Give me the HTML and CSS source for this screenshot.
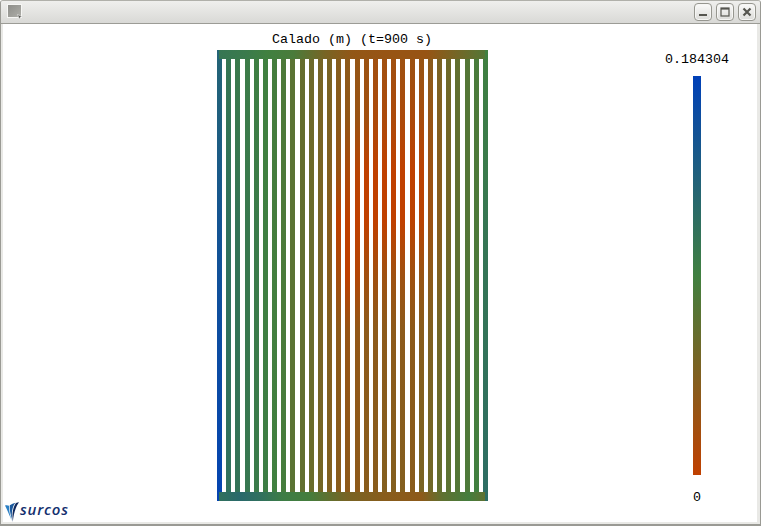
FILE: index.html
```html
<!DOCTYPE html>
<html lang="pt">
<head>
<meta charset="utf-8">
<title>Calado</title>
<link rel="stylesheet" href="styles.css">
</head>
<body>
<div class="window">
  <header class="titlebar">
    <svg class="app-icon" width="16" height="16" viewBox="0 0 16 16">
      <defs><linearGradient id="appfill" x1="0" y1="0" x2="1" y2="1"><stop offset="0" stop-color="#8c8c88"/><stop offset="1" stop-color="#b0b0aa"/></linearGradient></defs>
      <rect x="0.5" y="0.5" width="14" height="13" fill="url(#appfill)" stroke="#f6f6f4"/>
      <path d="M10.5 10.5 L15 12.5 L13 13.5 L12.5 15.5 Z" fill="#55554f" stroke="#eee" stroke-width="0.6"/>
    </svg>
    <div class="buttons">
      <button class="wbtn" aria-label="Minimizar"><svg width="10" height="10" viewBox="0 0 10 10"><rect x="1" y="7" width="8" height="2" fill="#55554f"/></svg></button>
      <button class="wbtn" aria-label="Maximizar"><svg width="10" height="10" viewBox="0 0 10 10"><rect x="1" y="1" width="8" height="8" fill="none" stroke="#55554f" stroke-width="1.2"/><rect x="1" y="1" width="8" height="1.6" fill="#55554f"/></svg></button>
      <button class="wbtn" aria-label="Fechar"><svg width="10" height="10" viewBox="0 0 10 10"><path d="M1.5 1.5 L8.5 8.5 M8.5 1.5 L1.5 8.5" stroke="#55554f" stroke-width="2.2"/></svg></button>
    </div>
  </header>
  <main class="content">
    <div class="logo-col">
      <div class="logo">
        <svg class="logo-mark" width="15" height="20" viewBox="0 0 15 20">
          <path d="M0 3.500 C1.500 3 3 3.200 4 3.800 C4 9 5 14 7 19 C4.500 14 2.500 8 0 3.500 Z" fill="#2a7fc4"/>
          <path d="M4.800 3.200 C6.500 2 8.500 1.200 10.500 0.800 C7 5 6.200 11 7.300 18 C5.500 13 4.500 8 4.800 3.200 Z" fill="#1c5a9e"/>
          <path d="M11 1 C12 0.600 13 0.300 14 0.200 C10.500 5 8.500 12 7.800 20 C7 13 7.500 6 11 1 Z" fill="#10285c"/>
        </svg>
        <span class="logo-text">surcos</span>
      </div>
    </div>
    <section class="plot-col">
      <h1 class="plot-title">Calado (m) (t=900 s)</h1>
      <div class="plot" id="plot">
        <div class="bars" id="bars"></div>
        <div class="band band-top" id="bandTop"></div>
        <div class="band band-bottom" id="bandBottom"></div>
      </div>
    </section>
    <aside class="legend">
      <div class="legend-label">0.184304</div>
      <div class="legend-bar"></div>
      <div class="legend-label legend-min">0</div>
    </aside>
  </main>
</div>
<script src="script.js"></script>
</body>
</html>
```
FILE: styles.css
```css
* { box-sizing: border-box; }
html, body { margin: 0; padding: 0; background: #fff; }
.window {
  width: 761px;
  height: 526px;
  display: flex;
  flex-direction: column;
  background: #e9e9e6;
  border: 1px solid #9a9a94;
  border-bottom-width: 2px;
  border-top-color: #b0b0aa;
  border-radius: 3px 3px 0 0;
  overflow: hidden;
}
.titlebar {
  height: 23px;
  flex: none;
  display: flex;
  align-items: center;
  justify-content: space-between;
  padding: 0 4px 0 6px;
  background: linear-gradient(#efefed, #d9d9d6);
  border-bottom: 1px solid #9c9c96;
}
.app-icon { display: block; }
.buttons { display: flex; gap: 4px; }
.wbtn {
  width: 18px;
  height: 18px;
  padding: 0;
  display: flex;
  align-items: center;
  justify-content: center;
  border: 1px solid #96968f;
  border-radius: 4px;
  background: linear-gradient(#fafaf9, #dcdcd9);
  box-shadow: inset 0 0 0 1px #f6f6f4;
}
.content {
  flex: 1;
  display: flex;
  margin: 0 3px 2px 2px;
  background: #fff;
  min-height: 0;
}
.logo-col {
  width: 214px;
  flex: none;
  display: flex;
  flex-direction: column;
  justify-content: flex-end;
  padding: 0 0 0 2px;
}
.logo { display: flex; align-items: flex-start; height: 20px; }
.logo-mark { display: block; flex: none; }
.logo-text {
  font-family: "Open Sans", sans-serif;
  font-size: 15px;
  line-height: 14px;
  font-weight: 600;
  font-style: italic;
  color: #14306e;
  letter-spacing: 0.75px;
}
.plot-col { width: 271px; flex: none; }
.plot-title {
  margin: 0 0 0 -1px;
  height: 26px;
  padding-top: 8px;
  font-family: "Liberation Mono", monospace;
  font-weight: normal;
  font-size: 13.33px;
  line-height: 15px;
  color: #000;
  text-align: center;
  white-space: pre;
}
.plot { position: relative; height: 451px; }
.bars { display: flex; justify-content: space-between; height: 100%; }
.bar { width: 5px; flex: none; }
.band { position: absolute; left: 2px; right: 3px; height: 9px; }
.band-top { top: 0; }
.band-bottom { bottom: 0; }
.legend {
  margin-left: 177px;
  width: 64px;
  flex: none;
  display: flex;
  flex-direction: column;
  align-items: center;
  padding-top: 28px;
}
.legend-label {
  font-family: "Liberation Mono", monospace;
  font-size: 13.33px;
  line-height: 16px;
  height: 16px;
  color: #000;
}
.legend-bar {
  width: 8px;
  height: 399px;
  margin-top: 8px;
  background: linear-gradient(#0040b8, #408040 50%, #c04000);
}
.legend-min { margin-top: 15px; }
```
FILE: script.js
```js
// Water-depth values, 0..1 of the colour scale, sampled along each furrow.
var STOPS = [0, 15, 27, 38, 50, 62, 100];
var FURROWS = [
  [.28,.24,.2,.16,.13,.1,.03],
  [.42,.41,.4,.38,.38,.38,.38],
  [.45,.44,.43,.41,.41,.41,.40],
  [.47,.46,.45,.44,.44,.44,.43],
  [.49,.48,.47,.46,.46,.46,.46],
  [.5,.5,.5,.49,.49,.49,.48],
  [.52,.52,.52,.52,.51,.51,.5],
  [.55,.55,.55,.55,.54,.54,.52],
  [.6,.6,.6,.6,.6,.6,.6],
  [.65,.64,.64,.63,.63,.63,.63],
  [.68,.68,.67,.66,.66,.66,.66],
  [.71,.72,.72,.72,.72,.72,.7],
  [.72,.74,.76,.78,.78,.76,.75],
  [.77,.79,.85,1,.9,.8,.78],
  [.8,.82,.92,1,1,.84,.8],
  [.83,.85,.97,1,.95,.82,.8],
  [.85,.88,1,1,.88,.8,.78],
  [.87,.92,1,1,.88,.8,.78],
  [.87,.92,1,1,.87,.8,.76],
  [.87,.92,1,1,.87,.8,.76],
  [.86,.92,1,1,.87,.8,.76],
  [.85,.92,1,.98,.87,.8,.78],
  [.83,.9,.98,.97,.84,.78,.72],
  [.78,.84,.86,.86,.8,.75,.68],
  [.72,.76,.78,.78,.75,.7,.63],
  [.67,.7,.7,.7,.68,.65,.6],
  [.63,.63,.63,.62,.62,.61,.57],
  [.58,.58,.58,.58,.57,.57,.55],
  [.53,.55,.55,.55,.55,.54,.5],
  [.5,.47,.45,.42,.41,.4,.35]
];
var TOP_BAND = [[0,.42],[10,.45],[18,.5],[28,.54],[40,.72],[50,.82],[62,.84],[78,.84],[88,.72],[100,.58]];
var BOTTOM_BAND = [[0,.38],[8,.32],[16,.38],[24,.48],[34,.52],[48,.72],[62,.78],[76,.8],[84,.62],[94,.52],[100,.62]];

function colour(t) {
  var a = t < .5 ? [0, 64, 184] : [64, 128, 64];
  var b = t < .5 ? [64, 128, 64] : [192, 64, 0];
  var k = t < .5 ? t * 2 : (t - .5) * 2;
  return "rgb(" + a.map(function (v, i) { return Math.round(v + (b[i] - v) * k); }).join(",") + ")";
}
function gradient(dir, pairs) {
  return "linear-gradient(" + dir + "," + pairs.map(function (p) {
    return colour(p[1]) + " " + p[0] + "%";
  }).join(",") + ")";
}
var bars = document.getElementById("bars");
FURROWS.forEach(function (values) {
  var bar = document.createElement("div");
  bar.className = "bar";
  bar.style.background = gradient("to bottom", values.map(function (v, i) { return [STOPS[i], v]; }));
  bars.appendChild(bar);
});
document.getElementById("bandTop").style.background = gradient("to right", TOP_BAND);
document.getElementById("bandBottom").style.background = gradient("to right", BOTTOM_BAND);
```
